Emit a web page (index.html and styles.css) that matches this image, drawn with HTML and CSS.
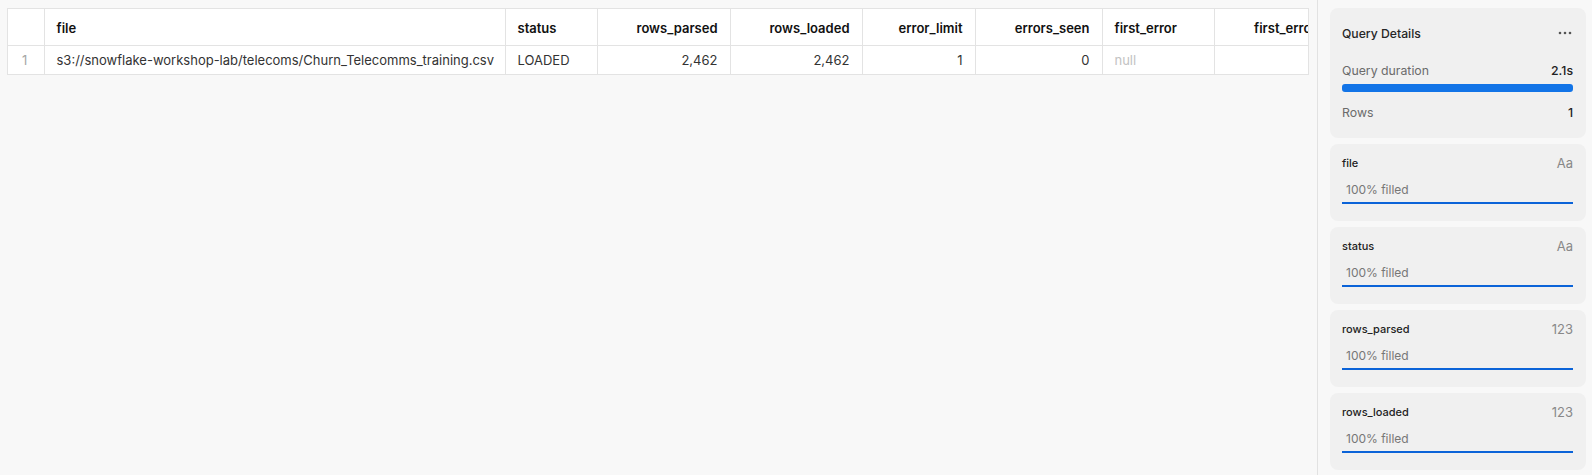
FILE: index.html
```html
<!DOCTYPE html>
<html>
<head>
<meta charset="utf-8">
<link rel="stylesheet" href="styles.css">
</head>
<body>
<div class="app">
  <main class="main">
    <div class="grid-wrap">
      <table class="grid">
        <colgroup>
          <col class="c-idx"><col class="c-file"><col class="c-status"><col class="c-rp"><col class="c-rl"><col class="c-el"><col class="c-es"><col class="c-fe"><col class="c-fel">
        </colgroup>
        <thead>
          <tr>
            <th class="idx"></th>
            <th class="l">file</th>
            <th class="l">status</th>
            <th class="r">rows_parsed</th>
            <th class="r">rows_loaded</th>
            <th class="r">error_limit</th>
            <th class="r">errors_seen</th>
            <th class="l">first_error</th>
            <th class="r">first_error_line</th>
          </tr>
        </thead>
        <tbody>
          <tr>
            <td class="idx">1</td>
            <td class="l">s3://snowflake-workshop-lab/telecoms/Churn_Telecomms_training.csv</td>
            <td class="l">LOADED</td>
            <td class="r">2,462</td>
            <td class="r">2,462</td>
            <td class="r">1</td>
            <td class="r">0</td>
            <td class="l null">null</td>
            <td class="r"></td>
          </tr>
        </tbody>
      </table>
    </div>
  </main>
  <aside class="side">
    <section class="card details">
      <div class="d-head">
        <span class="d-title">Query Details</span>
        <svg class="more" width="14" height="4" viewBox="0 0 14 4"><circle cx="2" cy="2" r="1.3"/><circle cx="7" cy="2" r="1.3"/><circle cx="12" cy="2" r="1.3"/></svg>
      </div>
      <div class="d-row d-dur"><span class="d-lab">Query duration</span><span class="d-val">2.1s</span></div>
      <div class="bar"></div>
      <div class="d-row d-rows"><span class="d-lab">Rows</span><span class="d-val">1</span></div>
    </section>
    <section class="card col">
      <div class="c-head"><span class="c-name">file</span><span class="c-type">Aa</span></div>
      <div class="c-fill">100% filled</div>
    </section>
    <section class="card col">
      <div class="c-head"><span class="c-name">status</span><span class="c-type">Aa</span></div>
      <div class="c-fill">100% filled</div>
    </section>
    <section class="card col">
      <div class="c-head"><span class="c-name">rows_parsed</span><span class="c-type">123</span></div>
      <div class="c-fill">100% filled</div>
    </section>
    <section class="card col">
      <div class="c-head"><span class="c-name">rows_loaded</span><span class="c-type">123</span></div>
      <div class="c-fill">100% filled</div>
    </section>
  </aside>
</div>
</body>
</html>
```

FILE: styles.css
```css
* { box-sizing: border-box; }
html, body { margin: 0; padding: 0; }
body {
  font-family: Inter, "Noto Sans", "Liberation Sans", sans-serif;
  background: #f8f8f8;
  color: #1f1f1f;
  width: 1592px;
  height: 475px;
  overflow: hidden;
}
.app { display: flex; height: 475px; }
.main {
  flex: 1;
  padding: 8px 0 0 7px;
  background: #f8f8f8;
  min-width: 0;
}
.grid-wrap {
  width: 1302px;
  overflow: hidden;
  border: 1px solid #e3e3e3;
  background: #fff;
}
.grid {
  table-layout: fixed;
  border-collapse: collapse;
  width: 1350px;
  font-size: 13px;
}
.c-idx { width: 36px; }
.c-file { width: 461px; }
.c-status { width: 92px; }
.c-rp { width: 133px; }
.c-rl { width: 132px; }
.c-el { width: 113px; }
.c-es { width: 127px; }
.c-fe { width: 112px; }
.c-fel { width: 144px; }
.grid th, .grid td {
  border-right: 1px solid #e3e3e3;
  border-bottom: 1px solid #e3e3e3;
  padding: 0 12px;
  white-space: nowrap;
  overflow: hidden;
}
.grid th {
  height: 36px;
  font-weight: 600;
  color: #111;
  padding-top: 2px;
}
.grid td {
  height: 29px;
  color: #333;
}
.grid tbody tr td { border-bottom: none; }
.grid .l { text-align: left; }
.grid .r { text-align: right; }
.grid td.idx { color: #a6a6a6; padding-left: 14px; }
.grid td.null { color: #c2c2c2; }

.side {
  width: 275px;
  flex: none;
  border-left: 1px solid #e2e2e2;
  padding: 8px 6px 0 12px;
  display: flex;
  flex-direction: column;
  gap: 6px;
  background: #f8f8f8;
}
.card {
  background: #f0f0f0;
  border-radius: 8px;
  padding: 0 13px 0 12px;
}
.details { height: 130px; padding-top: 15px; }
.d-head {
  display: flex;
  justify-content: space-between;
  align-items: center;
  height: 20px;
}
.d-title { font-size: 12.2px; font-weight: 500; color: #262626; }
.more { fill: #555; margin-right: 1px; }
.d-row {
  display: flex;
  justify-content: space-between;
  align-items: center;
  height: 18px;
  font-size: 12.3px;
}
.d-dur { margin-top: 18px; }
.d-lab { color: #6b6b6b; }
.d-val { color: #222; font-weight: 500; }
.bar {
  margin-top: 5px;
  height: 8px;
  border-radius: 3px;
  background: #1274e7;
}
.d-rows { margin-top: 11px; }

.col { height: 77px; padding-top: 11px; }
.c-head {
  display: flex;
  justify-content: space-between;
  align-items: center;
  height: 16px;
}
.c-name { font-size: 11px; font-weight: 500; color: #222; }
.c-type { font-size: 13px; color: #888; }
.c-fill {
  margin-top: 10px;
  padding-left: 4px;
  font-size: 12px;
  line-height: 18px;
  height: 23px;
  padding-bottom: 3px;
  color: #777;
  border-bottom: 2px solid #0b63d8;
}
```
